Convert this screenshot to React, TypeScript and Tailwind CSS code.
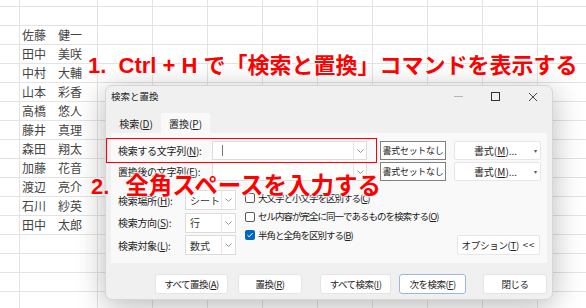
import React from "react";

const names: [string, string][] = [
  ["佐藤", "健一"],
  ["田中", "美咲"],
  ["中村", "大輔"],
  ["山本", "彩香"],
  ["高橋", "悠人"],
  ["藤井", "真理"],
  ["森田", "翔太"],
  ["加藤", "花音"],
  ["渡辺", "亮介"],
  ["石川", "紗英"],
  ["田中", "太郎"],
];

const colWidths = [20, 78, 55, 55, 55, 55, 55, 55, 55, 55, 55];

function Sheet() {
  const rows: React.ReactNode[] = [];
  rows.push(
    <div key="top" className="flex h-[7px] border-b border-[#e3e3e3]">
      {colWidths.map((w, i) => (
        <div key={i} className="shrink-0 border-r border-[#e3e3e3]" style={{ width: w }} />
      ))}
    </div>
  );
  for (let r = 0; r < 16; r++) {
    const n = r >= 1 && r - 1 < names.length ? names[r - 1] : null;
    rows.push(
      <div key={r} className="flex h-[19px] border-b border-[#e3e3e3]">
        {colWidths.map((w, i) => (
          <div
            key={i}
            className="shrink-0 border-r border-[#e3e3e3] flex items-center overflow-hidden whitespace-nowrap"
            style={{ width: w }}
          >
            {i === 1 && n ? (
              <span className="pl-[2px] text-[12px] text-[#444] leading-none">
                {n[0]}
                {"\u3000"}
                {n[1]}
              </span>
            ) : null}
          </div>
        ))}
      </div>
    );
  }
  return <div className="flex flex-col">{rows}</div>;
}

function U({ c }: { c: string }) {
  return <span className="underline underline-offset-[1px]">{c}</span>;
}

function Chevron() {
  return (
    <svg width="7" height="4" viewBox="0 0 7 4" className="block">
      <path d="M0.5 0.5 L3.5 3.5 L6.5 0.5" fill="none" stroke="#8a8a8a" strokeWidth="0.9" />
    </svg>
  );
}

function ComboInput({ cursor }: { cursor?: boolean }) {
  return (
    <div className="w-[155px] h-[19px] bg-white border border-[#dcdcdc] flex items-stretch">
      <div className="flex-1 flex items-center pl-[9px]">
        {cursor ? <div className="w-[1px] h-[11px] bg-[#777]" /> : null}
      </div>
      <div className="w-[13px] border-l border-[#e6e6e6] flex items-center justify-center">
        <Chevron />
      </div>
    </div>
  );
}

function Select({ value }: { value: string }) {
  return (
    <div className="w-[51px] h-[20px] bg-white border border-[#dcdcdc] flex items-stretch">
      <div className="flex-1 flex items-center pl-[4px] text-[10px] text-[#333]">{value}</div>
      <div className="w-[14px] border-l border-[#e6e6e6] flex items-center justify-center">
        <Chevron />
      </div>
    </div>
  );
}

function Check({ checked, children }: { checked?: boolean; children: React.ReactNode }) {
  return (
    <div className="h-[16px] flex items-center">
      {checked ? (
        <div className="w-[10px] h-[10px] rounded-[2px] bg-[#0067c0] flex items-center justify-center">
          <svg width="8" height="8" viewBox="0 0 8 8">
            <path d="M1.5 4.2 L3.2 5.8 L6.5 2.2" fill="none" stroke="white" strokeWidth="1" />
          </svg>
        </div>
      ) : (
        <div className="w-[10px] h-[10px] rounded-[2px] border border-[#5a5a5a] bg-white" />
      )}
      <span className="ml-[3px] text-[9.5px] tracking-[-1px] text-[#222] whitespace-nowrap">{children}</span>
    </div>
  );
}

function Btn({ w, ml, children, blue }: { w: number; ml: number; children: React.ReactNode; blue?: boolean }) {
  return (
    <div
      className={
        "h-[20px] bg-white rounded-[3px] border flex items-center justify-center text-[9.5px] tracking-[-0.5px] text-[#222] whitespace-nowrap " +
        (blue ? "border-[#9ab8df]" : "border-[#e4e4e4]")
      }
      style={{ width: w, marginLeft: ml }}
    >
      {children}
    </div>
  );
}

function FormatButtons() {
  return (
    <>
      <div className="ml-[13px] w-[66px] h-[19px] bg-white border border-[#808080] flex items-center justify-center text-[9px] tracking-[-0.3px] text-[#222] whitespace-nowrap">
        書式セットなし
      </div>
      <div className="relative ml-[8px] w-[87px] h-[19px] bg-white border border-[#e6e6e6] rounded-[2px] flex items-center justify-center text-[10px] text-[#222]">
        <span className="-ml-[4px]">
          書式(<U c="M" />)...
        </span>
        <span className="absolute right-[3px] top-[4px] text-[6px] text-[#555]">▾</span>
      </div>
    </>
  );
}

function Dialog() {
  return (
    <div className="absolute left-[105px] top-[85px] w-[448px] h-[215px] rounded-[7px] bg-[#f0f0f0] border border-[#d6d6d6] shadow-[0_6px_30px_rgba(0,0,0,0.28)] flex flex-col [font-family:'Noto_Sans_CJK_JP',sans-serif]">
      {/* title bar */}
      <div className="h-[21px] flex items-center pl-[5px]">
        <span className="text-[9.5px] text-[#1a1a1a] flex-1">検索と置換</span>
        <div className="flex items-center h-full">
          <div className="w-[37px] flex items-center justify-center">
            <div className="w-[9px] h-[1px] bg-[#b5b5b5]" />
          </div>
          <div className="w-[37px] flex items-center justify-center">
            <div className="w-[9px] h-[9px] border border-[#333]" />
          </div>
          <div className="w-[37px] flex items-center justify-center mr-[1px]">
            <svg width="10" height="10" viewBox="0 0 10 10">
              <path d="M1 1 L9 9 M9 1 L1 9" stroke="#333" strokeWidth="0.9" />
            </svg>
          </div>
        </div>
      </div>
      {/* tabs */}
      <div className="mt-[6px] flex pl-[5px] h-[20px]">
        <div className="w-[50px] flex items-center justify-center text-[10px] text-[#222]">
          <span>
            検索(<U c="D" />)
          </span>
        </div>
        <div className="w-[49px] bg-[#f9f9f9] flex items-center justify-center text-[10px] text-[#222]">
          <span>
            置換(<U c="P" />)
          </span>
        </div>
      </div>
      {/* panel */}
      <div className="mx-[5px] h-[130px] bg-[#f9f9f9] flex flex-col pt-[8px]">
        <div className="flex items-center h-[19px]">
          <div className="w-[101px] pl-[7px] text-[10px] tracking-[-0.3px] text-[#222] whitespace-nowrap">
            検索する文字列(<U c="N" />):
          </div>
          <ComboInput cursor />
          <FormatButtons />
        </div>
        <div className="flex items-center h-[19px] mt-[2px]">
          <div className="w-[101px] pl-[7px] text-[10px] tracking-[-0.3px] text-[#222] whitespace-nowrap">
            置換後の文字列(<U c="E" />):
          </div>
          <ComboInput />
          <FormatButtons />
        </div>
        <div className="flex mt-[9px]">
          <div className="w-[134px] flex flex-col gap-[2.5px]">
            {[
              ["検索場所(", "H", "):", "シート"],
              ["検索方向(", "S", "):", "行"],
              ["検索対象(", "L", "):", "数式"],
            ].map((r, i) => (
              <div key={i} className="flex items-center h-[20px]">
                <div className="w-[74px] pl-[7px] text-[10px] tracking-[-0.3px] text-[#222] whitespace-nowrap">
                  {r[0]}
                  <U c={r[1]} />
                  {r[2]}
                </div>
                <Select value={r[3]} />
              </div>
            ))}
          </div>
          <div className="flex-1 flex flex-col gap-[2.5px]">
            <Check>
              大文字と小文字を区別する(<U c="C" />)
            </Check>
            <Check>
              セル内容が完全に同一であるものを検索する(<U c="O" />)
            </Check>
            <Check checked>
              半角と全角を区別する(<U c="B" />)
            </Check>
          </div>
          <div className="flex flex-col justify-end pr-[7px]">
            <div className="w-[83px] h-[20px] bg-white border border-[#e6e6e6] rounded-[2px] flex items-center justify-center text-[9.5px] tracking-[-0.3px] text-[#222] whitespace-pre">
              <span>
                オプション(<U c="T" />)
              </span>
              <span className="ml-[4px] tracking-[1px]">&lt;&lt;</span>
            </div>
          </div>
        </div>
      </div>
      {/* bottom buttons */}
      <div className="flex mt-[11px]">
        <Btn w={73} ml={49}>
          <span>
            すべて置換(<U c="A" />)
          </span>
        </Btn>
        <Btn w={64} ml={10}>
          <span>
            置換(<U c="R" />)
          </span>
        </Btn>
        <Btn w={71} ml={18}>
          <span>
            すべて検索(<U c="I" />)
          </span>
        </Btn>
        <Btn w={67} ml={8} blue>
          <span>
            次を検索(<U c="F" />)
          </span>
        </Btn>
        <Btn w={64} ml={17}>
          <span>閉じる</span>
        </Btn>
      </div>
    </div>
  );
}

export default function App() {
  return (
    <div className="relative w-[586px] h-[308px] overflow-hidden bg-white [font-family:'Noto_Sans_CJK_JP',sans-serif]">
      <Sheet />
      <Dialog />
      {/* red highlight box */}
      <div className="absolute left-[106px] top-[138px] w-[271px] h-[25px] border-[1.5px] border-[#ff0000]" />
      {/* annotations */}
      <div className="absolute left-[88px] top-[52px] text-[22px] font-bold text-[#ff0000] leading-[28px] whitespace-pre [font-family:'Liberation_Sans','Noto_Sans_CJK_JP',sans-serif] [text-shadow:0_0_3px_#fff,0_0_3px_#fff,0_0_3px_#fff]">
        {"1.  Ctrl + H で「検索と置換」コマンドを表示する"}
      </div>
      <div className="absolute left-[91px] top-[171px] flex items-baseline font-bold text-[#ff0000] leading-[30px] whitespace-pre [font-family:'Liberation_Sans','Noto_Sans_CJK_JP',sans-serif] [text-shadow:0_0_3px_#fff,0_0_3px_#fff,0_0_3px_#fff]">
        <span className="text-[22px]">2.</span>
        <span className="ml-[16px] text-[23.5px]">全角スペースを入力する</span>
      </div>
    </div>
  );
}
